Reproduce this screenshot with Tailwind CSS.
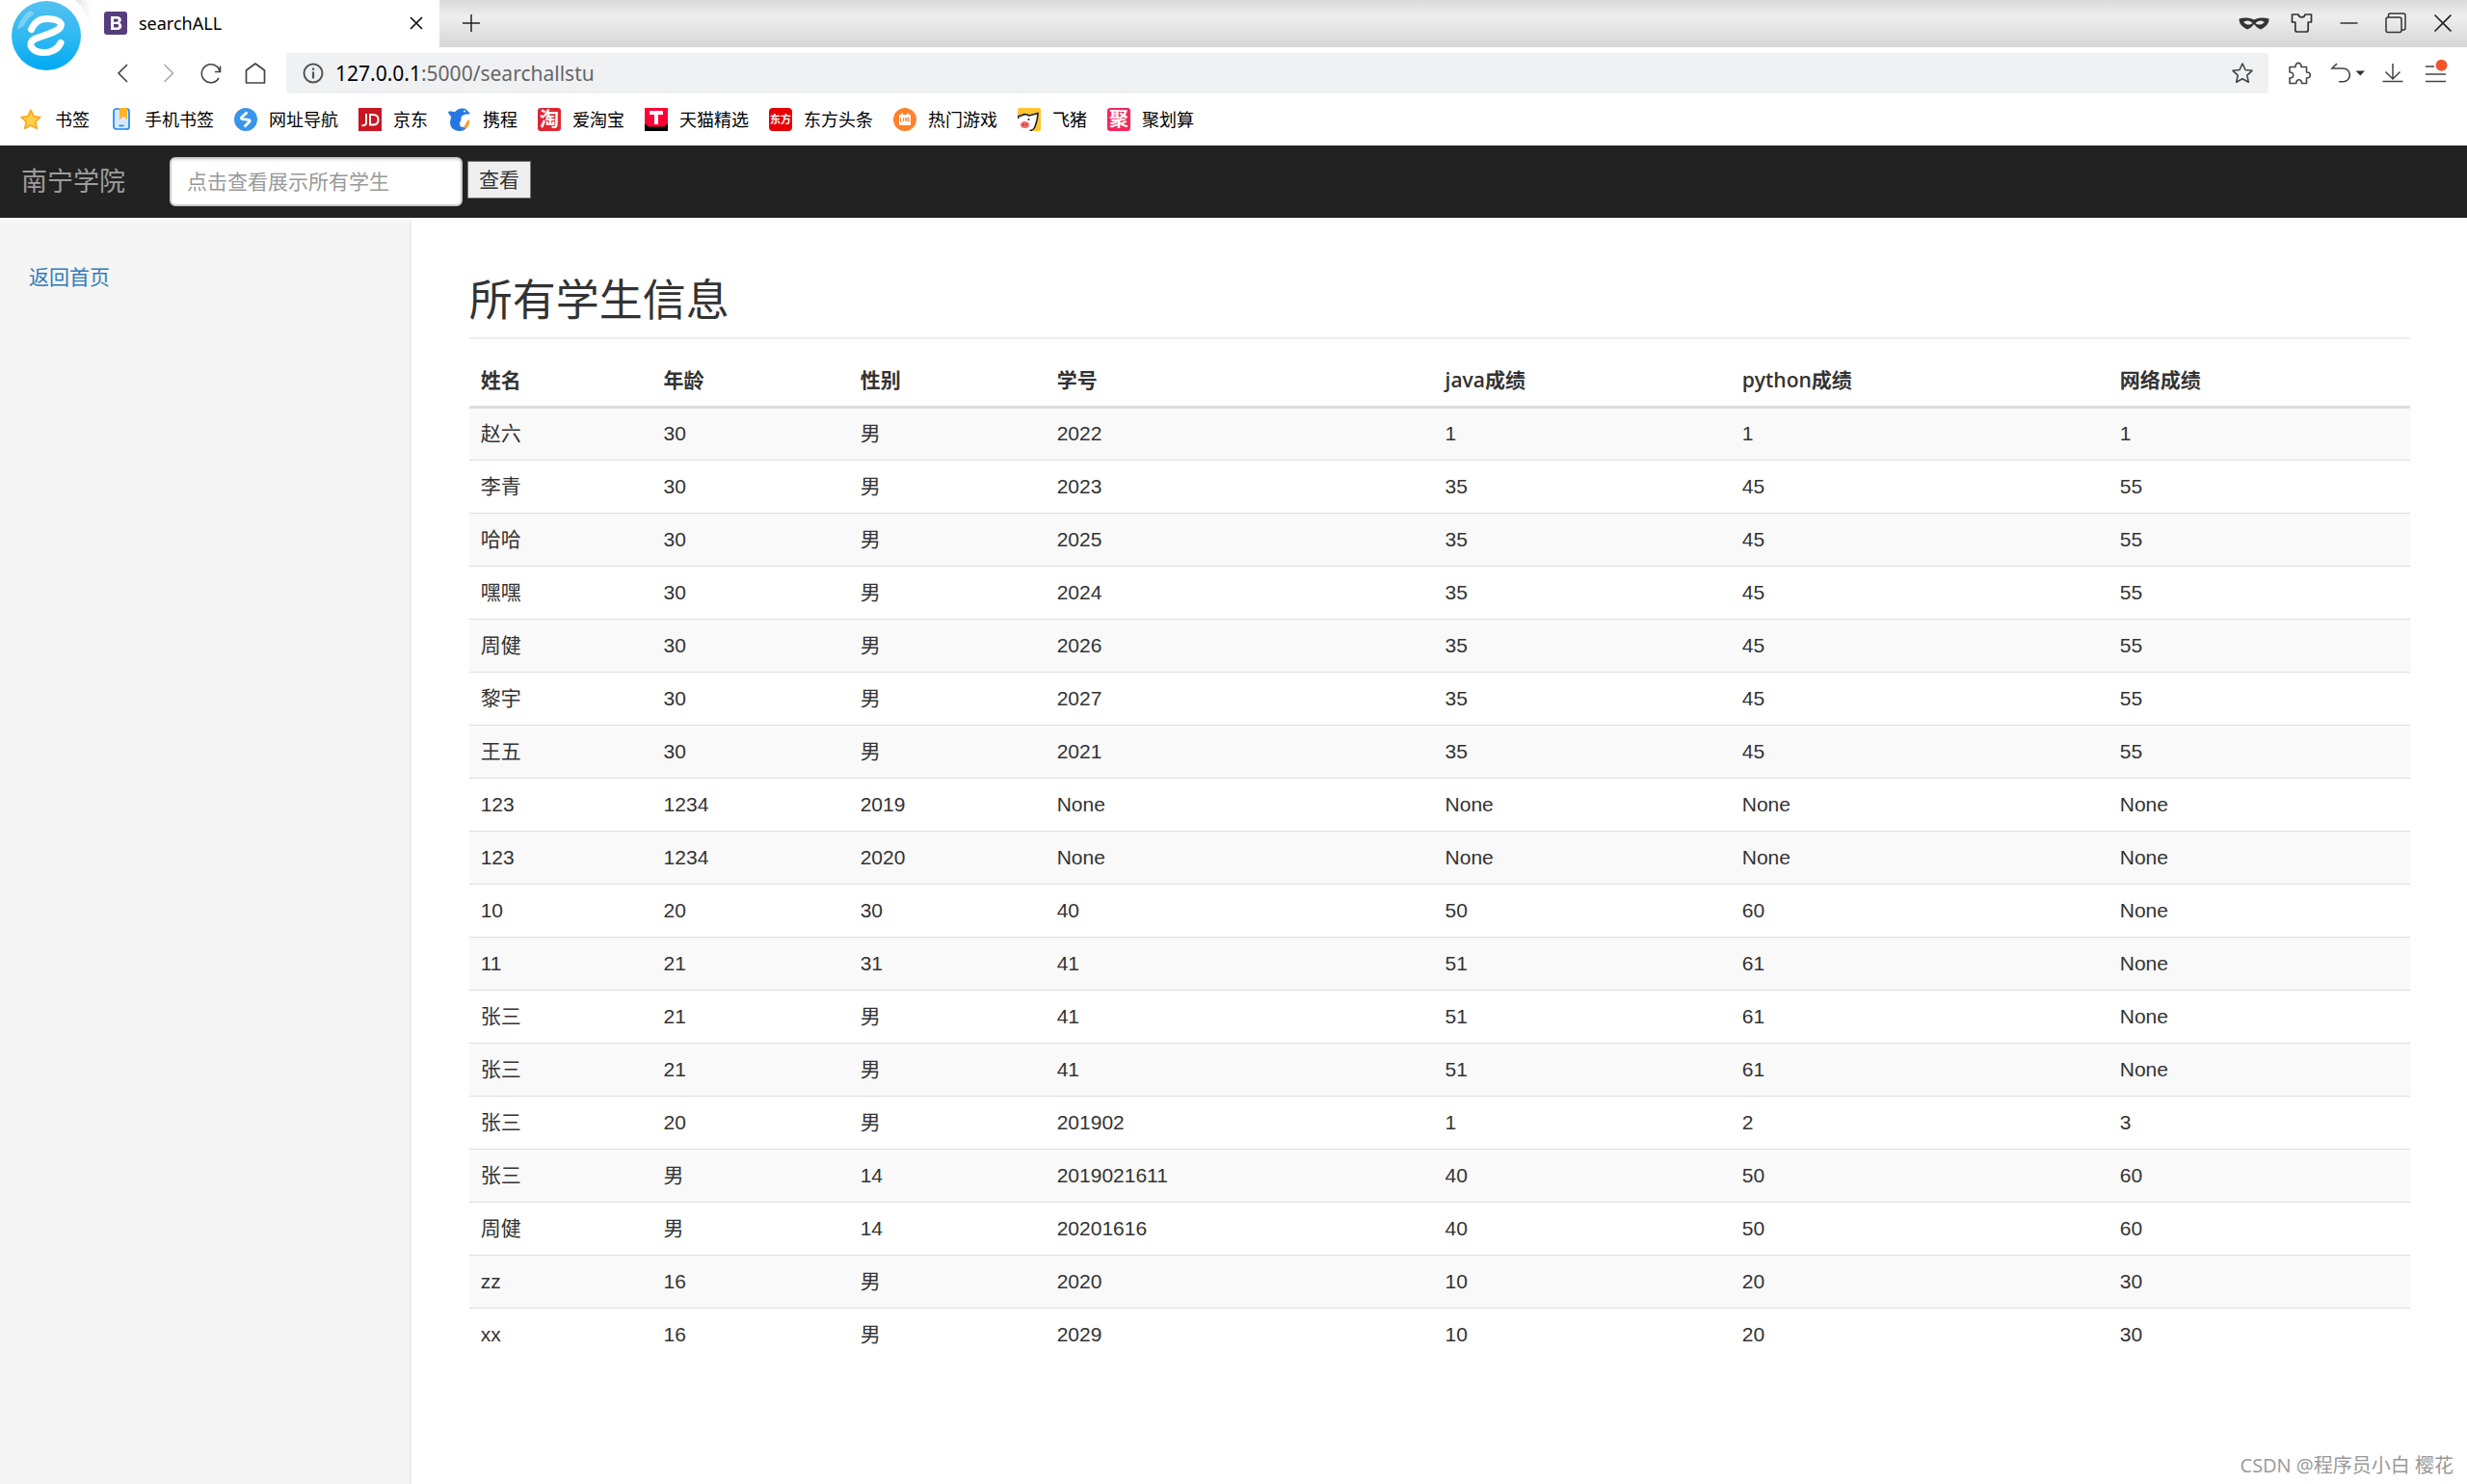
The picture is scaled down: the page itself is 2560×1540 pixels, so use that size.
<!DOCTYPE html>
<html lang="zh-CN">
<head>
<meta charset="utf-8">
<title>searchALL</title>
<script src="https://cdn.jsdelivr.net/npm/@tailwindcss/browser@4"></script>
</head>
<body class="min-h-screen flex flex-col bg-white text-[#333] text-[21px] leading-[30px] font-['Liberation_Sans','Noto_Sans_CJK_SC',sans-serif]">

<header class="relative font-['Noto_Sans','Noto_Sans_CJK_SC',sans-serif] text-black">
  <!-- tab strip -->
  <div class="flex h-[49px] bg-linear-to-b from-[#dadada] via-[#eeeeee] via-35% to-[#d6d6d6]">
    <div class="flex w-[456px] items-center bg-white pb-[2px] pl-[108px] pr-3">
      <svg class="size-6" viewBox="0 0 24 24"><rect width="24" height="24" rx="3" fill="#563d7c"/><path d="M7 5h6.200c3 0 4.600 1.200 4.600 3.500 0 1.600-.8 2.600-2.200 3.100 1.800.4 2.700 1.600 2.700 3.400 0 2.600-1.900 4-4.900 4H7zM10 7.500v3.200h2.600c1.500 0 2.200-.5 2.200-1.600s-.7-1.600-2.200-1.600zM10 13v3.500h3c1.500 0 2.300-.6 2.300-1.800S14.500 13 13 13z" fill="#fff" fill-rule="evenodd"/></svg>
      <span class="ml-3 flex-1 text-[18px] leading-6">searchALL</span>
      <button type="button" aria-label="关闭标签页"><svg class="size-6" viewBox="0 0 24 24" fill="none" stroke="#111" stroke-width="1.700"><path d="M6 6l12 12M18 6L6 18"/></svg></button>
    </div>
    <button type="button" aria-label="新标签页" class="ml-[21px] pb-[2px]"><svg class="size-6" viewBox="0 0 24 24" fill="none" stroke="#222" stroke-width="1.500"><path d="M12 3v18M3 12h18"/></svg></button>
    <div class="ml-auto flex items-center gap-[25px] pb-[2px] pr-[13px]">
      <button type="button" aria-label="无痕" class="-mr-1"><svg class="h-6 w-8" viewBox="0 0 32 24"><path fill="#333" fill-rule="evenodd" d="M.5 7.500C5 6 11 6 16 8.500 21 6 27 6 31.500 7.500 31.500 13 28 16 23 18.500 20 17.500 17.500 15 16 13 14.500 15 12 17.500 9 18.500 4 16 .5 13 .5 7.500zM5 11c3 3 6.500 3.500 9.500 1C12 9 8 8.500 5 11zM27 11c-3-2.500-7-2-9.500 1 3 2.500 6.500 2 9.500-1z"/></svg></button>
      <button type="button" aria-label="皮肤"><svg class="size-6" viewBox="0 0 24 24" fill="none" stroke="#333" stroke-width="1.700" stroke-linejoin="round"><path d="M2.500 3h6.500c.8 3.800 6.200 3.800 7 0h6.500v8h-3.300v8c0 1.200-.8 2-2 2H7.800c-1.200 0-2-.8-2-2v-8H2.500z"/></svg></button>
      <button type="button" aria-label="最小化"><svg class="size-6" viewBox="0 0 24 24" stroke="#333" stroke-width="1.500"><path d="M3.500 12h18"/></svg></button>
      <button type="button" aria-label="还原"><svg class="size-6" viewBox="0 0 24 24" fill="none" stroke="#333" stroke-width="1.500"><rect x="2" y="6" width="16" height="15.500" rx="2"/><path d="M4.500 6V3.800C4.500 2.600 5 2 6.200 2H20c1.200 0 2 .8 2 2v13c0 1.200-.6 2-1.800 2H18"/></svg></button>
      <button type="button" aria-label="关闭"><svg class="size-6" viewBox="0 0 24 24" stroke="#222" stroke-width="1.600"><path d="M3.500 3.500l17 17M20.500 3.500l-17 17"/></svg></button>
    </div>
  </div>

  <!-- address bar -->
  <div class="flex h-[54px] items-center pl-[115px] pr-5">
    <nav class="flex gap-[22px]">
      <button type="button" aria-label="后退"><svg class="size-6" viewBox="0 0 24 24" fill="none" stroke="#444" stroke-width="1.600"><path d="M17 3l-9 9 9 9"/></svg></button>
      <button type="button" aria-label="前进"><svg class="size-6" viewBox="0 0 24 24" fill="none" stroke="#aaa" stroke-width="1.600"><path d="M9.500 3l9 9-9 9"/></svg></button>
      <button type="button" aria-label="刷新"><svg class="size-6" viewBox="0 0 24 24" fill="none" stroke="#444" stroke-width="1.600"><path d="M20 17a9.500 9.500 0 1 1 1-7M21.500 4.500V10.500H16"/></svg></button>
      <button type="button" aria-label="主页"><svg class="size-6" viewBox="0 0 24 24" fill="none" stroke="#444" stroke-width="1.700" stroke-linejoin="round"><path d="M2.500 9L12 2l9.500 7v13h-19z"/></svg></button>
    </nav>
    <div class="ml-5 mr-5 flex h-[42px] flex-1 items-center rounded bg-[#f0f1f3] pl-4 pr-[15px]">
      <svg class="size-6" viewBox="0 0 24 24" fill="none" stroke="#555" stroke-width="2"><circle cx="12" cy="12" r="9.500"/><path d="M12 10.500v7M12 6.500v2.300" stroke-width="2.300"/></svg>
      <a href="http://127.0.0.1:5000/searchallstu" class="ml-[11px] flex-1 text-[21px] leading-7 text-[#666]"><span class="text-black">127.0.0.1</span>:5000/searchallstu</a>
      <button type="button" aria-label="收藏"><svg class="size-6" viewBox="0 0 24 24" fill="none" stroke="#444" stroke-width="1.600" stroke-linejoin="round"><path d="M12 2l3 6.500 7 .8-5.200 4.800 1.500 7.200L12 17.800l-6.300 3.500 1.500-7.200L2 9.300l7-.8z"/></svg></button>
    </div>
    <div class="flex gap-5">
      <button type="button" aria-label="扩展"><svg class="size-6" viewBox="0 0 24 24" fill="none" stroke="#444" stroke-width="1.600" stroke-linejoin="round"><path d="M2 5.500h6c-.5-5.500 6.500-5.500 6 0h5.500v5.500c5 0 5 6 0 6v5.500h-5c.3-5-6-5-5.700 0H2V17c5 0 5-6 0-6z"/></svg></button>
      <button type="button" aria-label="恢复"><svg class="h-6 w-9 -mr-[2px]" viewBox="0 0 36 24" fill="none" stroke="#444" stroke-width="1.600"><path d="M7 2L2 7h11.500a6.700 6.700 0 0 1 0 13.700H9"/><path d="M26.500 9.500h9.500l-4.700 5z" fill="#333" stroke="none"/></svg></button>
      <button type="button" aria-label="下载"><svg class="size-6" viewBox="0 0 24 24" fill="none" stroke="#444" stroke-width="1.500"><path d="M11 2v16M3.500 10.500L11 18l7.500-7.500M.5 20.500h21"/></svg></button>
      <button type="button" aria-label="菜单"><svg class="size-6 overflow-visible" viewBox="0 0 24 24" fill="none" stroke="#444" stroke-width="1.500"><path d="M1 5h9M1 13h21M1 20.500h21"/><circle cx="17.500" cy="3.800" r="6" fill="#f2552c" stroke="none"/></svg></button>
    </div>
  </div>

  <!-- bookmarks -->
  <nav class="flex h-12 items-center gap-[21px] pb-[6px] pl-[21px] text-[18px] leading-6">
    <a href="#" class="flex items-center gap-3"><svg class="size-6" viewBox="0 0 24 24"><path d="M11 2.500l3 6.200 6.800.9-5 4.700 1.300 6.900L11 18l-6.100 3.200 1.300-6.900-5-4.700L8 8.700z" fill="#ffcf45" stroke="#f9a825" stroke-width="1.800" stroke-linejoin="round"/></svg>书签</a>
    <a href="#" class="flex items-center gap-3"><svg class="size-6" viewBox="0 0 24 24"><rect x="4" y="1" width="16" height="21" rx="2.500" fill="#d8e8ff" stroke="#1a86f5" stroke-width="1.700"/><path d="M10 0h8v12l-4-3-4 3z" fill="#ffb52b"/><path d="M9.500 18.500h5" stroke="#1a86f5" stroke-width="1.600"/></svg>手机书签</a>
    <a href="#" class="flex items-center gap-3"><svg class="size-6" viewBox="0 0 24 24"><circle cx="12" cy="12" r="12" fill="#3795ea"/><path d="M13.500 4.500L8 9.500c-1 1.200-.5 2 .8 2.200l6 .6c1.300.2 1.800 1 .8 2.200l-5 5" fill="none" stroke="#fff" stroke-width="2.800"/></svg>网址导航</a>
    <a href="#" class="flex items-center gap-3"><svg class="size-6" viewBox="0 0 24 24"><path fill="#c91623" d="M0 0h24v24H0z"/><path d="M8 6v9.500c0 2-1.500 3-4.500 2.700M12 7v10.500h3c4 0 5.500-2 5.500-5.300S19 7 15 7z" fill="none" stroke="#fff" stroke-width="2"/></svg>京东</a>
    <a href="#" class="flex items-center gap-3"><svg class="size-6" viewBox="0 0 24 24"><path d="M0 4c3-1 5 0 7 .3C9 1 13 0 16 .5c3 .3 4 3 6.500 4.500.5 2-2 1.500-3.500 1.500-3 .5-6 2-5.500 5 .3 2-2 3-1.500 6 .5 2.500 3 3 5 2l4-4c-.5 5-4 8.500-9 8.500-7 0-11.500-5-9.500-12C4.500 8 1 8 0 4z" fill="#2577e3"/><path d="M22 12c1 6-3 10-7 9.500 3-2 2-6 7-9.500z" fill="#f79b1e"/><circle cx="17" cy="3.500" r="1" fill="#fff"/></svg>携程</a>
    <a href="#" class="flex items-center gap-3"><span class="grid size-6 place-items-center rounded-[3px] bg-[#dd2732] text-[20px] leading-6 font-bold text-white">淘</span>爱淘宝</a>
    <a href="#" class="flex items-center gap-3"><svg class="size-6" viewBox="0 0 24 24"><path fill="#ff0036" d="M0 0h24v24H0z"/><path d="M5 3h14v4h-5v10h-4V7H5z" fill="#fff"/><path d="M0 17c3 0 3 3 5 2.500h14c2 .5 2-2.500 5-2.500v7H0z"/></svg>天猫精选</a>
    <a href="#" class="flex items-center gap-3"><span class="grid size-6 place-items-center rounded bg-[#e60005] text-[11px] leading-6 font-bold text-white">东方</span>东方头条</a>
    <a href="#" class="flex items-center gap-3"><svg class="size-6" viewBox="0 0 24 24"><circle cx="12" cy="12" r="12" fill="#ff812b"/><path d="M6 7h2V5.500h2V7h4V5.500h2V7h2v11H6z" fill="#fff"/><path d="M7.500 10v4h2M10.500 10v4M12 10l1 4 1-4M17 10.200h-2v3.600h2M15 12h2" fill="none" stroke="#ff812b" stroke-width=".9"/></svg>热门游戏</a>
    <a href="#" class="flex items-center gap-3"><svg class="size-6" viewBox="0 0 24 24"><rect width="24" height="24" rx="2" fill="#ffc430"/><path d="M0 7l3 1c3-2 6-2 9-.5L21 5c0 6-1 11-5 18l-3 1H0z" fill="#fff"/><path d="M1 11C0 9 1 7.500 3 8.500c3-2.500 6-2.500 9-.5l9-2.500c0 6-1 9-3 14-1 2.500-2 4-5.500 4" fill="none" stroke="#1a1a2e" stroke-width="1.600"/><circle cx="11.500" cy="12" r="1" fill="#111"/><ellipse cx="7.500" cy="17.500" rx="4.500" ry="3.500" fill="#f2706f"/><path d="M6 16.500v2M9 16.500v2" stroke="#a22" stroke-width="1.300"/></svg>飞猪</a>
    <a href="#" class="flex items-center gap-3"><span class="grid size-6 place-items-center rounded-[3px] bg-[#f5275c] text-[20px] leading-6 font-bold text-white">聚</span>聚划算</a>
  </nav>

  <!-- browser badge over the tab strip -->
  <svg class="absolute left-0 top-0 h-[90px] w-[100px]" viewBox="0 0 100 90">
    <defs>
      <linearGradient id="badge" x1="0" y1="0" x2="0" y2="1"><stop offset="0" stop-color="#55c1f0"/><stop offset=".55" stop-color="#2cb8f2"/><stop offset="1" stop-color="#00a9f4"/></linearGradient>
      <linearGradient id="edge" x1="0" y1="0" x2="1" y2="0"><stop offset="0" stop-color="#dfe7ec"/><stop offset="1" stop-color="#fff"/></linearGradient>
    </defs>
    <path d="M78 0c10 8 17 22 18 49V12L90 0z" fill="url(#edge)"/>
    <circle cx="48" cy="37" r="36" fill="url(#badge)"/>
    <path d="M18 31c1-8 6-15 13-20l5 3c-6 4-9 8-11 13z" fill="#fff" opacity=".3"/>
    <path d="M32.500 30.500c3-7 8-11 16-11 12 0 19 5 12.500 10.500-6 5-18 7-25 10.500-8 4-4 13 8 14 8 .5 16-3 19-10" fill="none" stroke="#fff" stroke-width="7" stroke-linecap="round"/>
  </svg>
</header>

<!-- site navbar -->
<div class="mb-[2px] flex h-[75px] items-center bg-[#222] pl-[22px]">
  <a href="#" class="mr-[46px] text-[27px] leading-[30px] text-[#9d9d9d]">南宁学院</a>
  <form class="flex items-start gap-[5px]" onsubmit="return false">
    <input type="text" aria-label="学生查询" placeholder="点击查看展示所有学生" class="h-[51px] w-[304px] rounded-md border-2 border-[#ccc] bg-white px-4 text-[21px] text-[#555] shadow-[inset_0_2px_2px_rgba(0,0,0,0.075)] placeholder:text-[#999]">
    <button type="submit" class="mt-1 h-[39px] w-[66px] border border-[#767676] bg-[#efefef] text-[21px] leading-[30px] text-[#333]">查看</button>
  </form>
</div>

<div class="flex flex-1">
  <aside class="w-1/6 border-r-2 border-[#eee] bg-[#f5f5f5] pl-[30px] pt-[45px]">
    <a href="#" class="text-[#337ab7]">返回首页</a>
  </aside>
  <main class="w-5/6 pl-[60px] pr-[59px] pt-[60px]">
    <h1 class="mb-[15px] border-b-2 border-[#eee] pb-3 text-[45px] leading-[50px]">所有学生信息</h1>
    <table class="w-full border-collapse text-left">
      <thead>
        <tr class="h-[55px] border-b-3 border-[#ddd] font-['Open_Sans','Noto_Sans_CJK_SC',sans-serif]">
          <th class="w-[9.43%] px-3">姓名</th><th class="w-[10.13%] px-3">年龄</th><th class="w-[10.13%] px-3">性别</th><th class="w-[20%] px-3">学号</th><th class="w-[15.3%] px-3 font-semibold">java<span class="font-bold">成绩</span></th><th class="w-[19.46%] px-3 font-semibold">python<span class="font-bold">成绩</span></th><th class="px-3">网络成绩</th>
        </tr>
      </thead>
      <tbody id="students"></tbody>
    </table>
  </main>
</div>

<p class="absolute bottom-1 right-[14px] text-[20px] leading-[30px] text-[#999] font-['Open_Sans','Noto_Sans_CJK_SC',sans-serif]">CSDN @程序员小白 樱花</p>

<script>
const students = [
  ['赵六','30','男','2022','1','1','1'],
  ['李青','30','男','2023','35','45','55'],
  ['哈哈','30','男','2025','35','45','55'],
  ['嘿嘿','30','男','2024','35','45','55'],
  ['周健','30','男','2026','35','45','55'],
  ['黎宇','30','男','2027','35','45','55'],
  ['王五','30','男','2021','35','45','55'],
  ['123','1234','2019','None','None','None','None'],
  ['123','1234','2020','None','None','None','None'],
  ['10','20','30','40','50','60','None'],
  ['11','21','31','41','51','61','None'],
  ['张三','21','男','41','51','61','None'],
  ['张三','21','男','41','51','61','None'],
  ['张三','20','男','201902','1','2','3'],
  ['张三','男','14','2019021611','40','50','60'],
  ['周健','男','14','20201616','40','50','60'],
  ['zz','16','男','2020','10','20','30'],
  ['xx','16','男','2029','10','20','30'],
];
document.getElementById('students').innerHTML = students.map(row =>
  '<tr class="h-[55px] border-b border-[#ddd] odd:bg-[#f9f9f9] last:border-b-0">' +
  row.map(v => '<td class="px-3">' + v + '</td>').join('') + '</tr>').join('');
</script>
</body>
</html>
